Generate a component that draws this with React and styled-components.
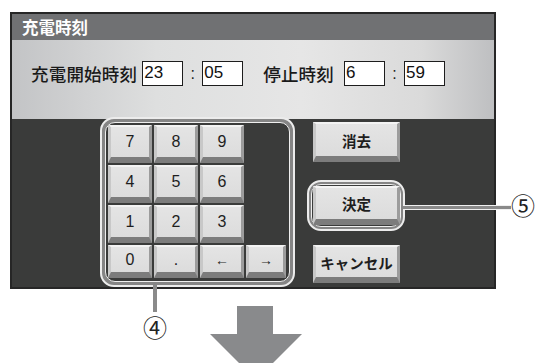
import React from 'react'
import styled, { createGlobalStyle } from 'styled-components'

const GlobalStyle = createGlobalStyle`
  html, body {
    margin: 0;
    padding: 0;
    background: #fff;
    overflow: hidden;
  }
  body {
    font-family: "Liberation Sans", "Noto Sans CJK JP", sans-serif;
  }
`

const Page = styled.div`
  width: 542px;
  height: 363px;
  padding: 12px 0 0 10px;
  box-sizing: border-box;
  overflow: hidden;
`

const Frame = styled.div`
  width: 486px;
  box-sizing: border-box;
  border: 2px solid #262626;
  background: #3a3b3a;
`

const TitleBar = styled.div`
  height: 26px;
  background: #707173;
  color: #fff;
  font-family: "Noto Sans CJK JP", sans-serif;
  font-weight: 700;
  font-size: 16.5px;
  line-height: 26px;
  padding-left: 10px;
`

const InputPanel = styled.div`
  height: 79px;
  box-sizing: border-box;
  padding: 21px 0 0 19px;
  background: linear-gradient(90deg, #c3c4c6 0%, #dedfdf 30%, #e6e6e6 60%, #dadada 85%, #bebfc1 100%);
`

const Row = styled.div`
  display: flex;
  align-items: center;
  height: 25px;
`

const Label = styled.span`
  font-family: "Noto Sans CJK JP", sans-serif;
  font-weight: 500;
  font-size: 17.5px;
  color: #1a1a1a;
  margin-left: ${p => p.gap || 0}px;
  margin-right: ${p => p.after || 5}px;
  letter-spacing: 0.2px;
`

const TimeBox = styled.div`
  width: 41px;
  height: 25px;
  box-sizing: border-box;
  border: 1.5px solid #1d1d1d;
  background: #fff;
  font-family: "Liberation Sans", sans-serif;
  font-size: 17px;
  line-height: 22px;
  padding-left: 1px;
  color: #111;
`

const Colon = styled.span`
  width: 19px;
  text-align: center;
  font-size: 16px;
  color: #222;
`

const Console = styled.div`
  height: 168px;
  display: flex;
  padding-left: 88px;
`

const PadRing = styled.div`
  position: relative;
  margin-top: -2px;
  width: 195px;
  height: 170px;
  box-sizing: border-box;
  border: 2px solid #ececec;
  border-radius: 14px;
  background: #858585;
  padding: 3px;
`

const PadInner = styled.div`
  height: 100%;
  box-sizing: border-box;
  border: 1px solid #efefef;
  border-radius: 10px;
  background: #3a3b3a;
  padding: 2px;
  display: grid;
  grid-template-columns: 44px 44px 44px 40px;
  grid-template-rows: 38px 38px 38px 33px;
  gap: 2px;
  overflow: hidden;
`

const bevel = `
  box-sizing: border-box;
  background: linear-gradient(180deg, #e4e4e4 0%, #dcdcdc 100%);
  border-style: solid;
  border-width: 2px 3px 6px 3px;
  border-color: #f3f3f3 #9c9c9c #7c7c7c #c8c8c8;
  color: #1e1e1e;
  display: flex;
  align-items: center;
  justify-content: center;
`

const Key = styled.div`
  ${bevel}
  font-family: "Liberation Sans", sans-serif;
  font-size: ${p => (p.small ? 14 : 16)}px;
  font-weight: ${p => (p.small ? 700 : 400)};
`

const Side = styled.div`
  display: flex;
  flex-direction: column;
  margin-left: 18px;
  padding-top: 3px;
`

const SideButton = styled.div`
  ${bevel}
  width: 87px;
  height: ${p => p.h || 40}px;
  margin-top: ${p => p.mt || 0}px;
  font-family: "Noto Sans CJK JP", sans-serif;
  font-weight: 700;
  font-size: 14.5px;
`

const FocusRing = styled.div`
  position: relative;
  margin: 18px 0 0 -6px;
  width: 98px;
  box-sizing: border-box;
  border: 2px solid #ececec;
  border-radius: 14px;
  background: #858585;
  padding: 2px;
`

const FocusInner = styled.div`
  border: 1px solid #efefef;
  border-radius: 10px;
  padding: 1px;
  background: #3a3b3a;
`

const LeaderH = styled.div`
  position: absolute;
  left: 100%;
  top: 23px;
  width: 108px;
  height: 3px;
  background: #8a8a8a;
  border-top: 1px solid #f0f0f0;
  border-bottom: 1px solid #f0f0f0;
`

const LeaderV = styled.div`
  position: absolute;
  left: 51px;
  top: 100%;
  display: flex;
  flex-direction: column;
  align-items: center;
  width: 4px;
`

const Stem = styled.div`
  width: 4px;
  height: 27px;
  background: #8a8a8a;
  flex-shrink: 0;
`

const Marker = styled.span`
  position: ${p => (p.abs ? 'absolute' : 'static')};
  left: ${p => (p.abs ? 'calc(100% + 108px)' : 'auto')};
  top: ${p => (p.abs ? '10px' : 'auto')};
  margin-top: ${p => (p.abs ? 0 : 2)}px;
  font-family: "Noto Sans CJK JP", sans-serif;
  font-size: 24px;
  line-height: 26px;
  color: #222;
  white-space: nowrap;
`

const DownArrow = styled.svg`
  display: block;
  margin: 17px 0 0 200px;
`

const keys = ['7', '8', '9', null, '4', '5', '6', null, '1', '2', '3', null, '0', '.', '←', '→']

export default function App() {
  return (
    <Page>
      <GlobalStyle />
      <Frame>
        <TitleBar>充電時刻</TitleBar>
        <InputPanel>
          <Row>
            <Label>充電開始時刻</Label>
            <TimeBox>23</TimeBox>
            <Colon>:</Colon>
            <TimeBox>05</TimeBox>
            <Label gap={20} after={10}>停止時刻</Label>
            <TimeBox>6</TimeBox>
            <Colon>:</Colon>
            <TimeBox>59</TimeBox>
          </Row>
        </InputPanel>
        <Console>
          <PadRing>
            <PadInner>
              {keys.map((k, i) =>
                k === null ? <div key={i} /> : (
                  <Key key={i} small={k === '←' || k === '→'}>{k}</Key>
                )
              )}
            </PadInner>
            <LeaderV>
              <Stem />
              <Marker>④</Marker>
            </LeaderV>
          </PadRing>
          <Side>
            <SideButton>消去</SideButton>
            <FocusRing>
              <FocusInner>
                <SideButton h={39}>決定</SideButton>
              </FocusInner>
              <LeaderH />
              <Marker abs>⑤</Marker>
            </FocusRing>
            <SideButton mt={14} h={38}>キャンセル</SideButton>
          </Side>
        </Console>
      </Frame>
      <DownArrow width="92" height="74" viewBox="0 0 92 74">
        <polygon points="27,0 63,0 63,28 92,28 46,74 0,28 27,28" fill="#898a8c" />
      </DownArrow>
    </Page>
  )
}
